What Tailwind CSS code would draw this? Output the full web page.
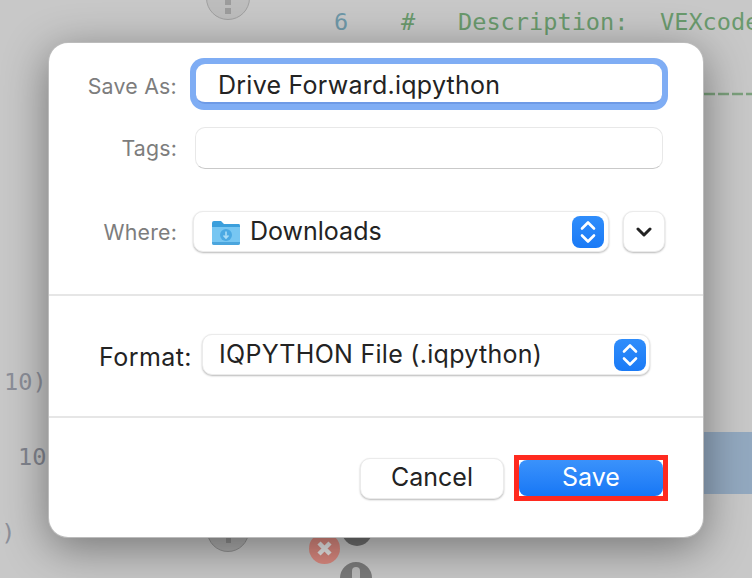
<!doctype html>
<html>
<head>
<meta charset="utf-8">
<script src="https://cdn.jsdelivr.net/npm/@tailwindcss/browser@4"></script>
</head>
<body class="m-0">
<div class="relative w-[752px] h-[578px] overflow-hidden bg-[#c8c8c8] font-['Inter',sans-serif]">
  <!-- dimmed editor behind the sheet -->
  <div class="absolute left-[206px] top-[-24px] w-[44px] h-[44px] rounded-full border border-[#a0a0a0] bg-[#bdbdbd] flex flex-col items-center justify-end gap-[3px] pb-[5px]"><span class="w-[6px] h-[6px] bg-[#9c9c9c]"></span><span class="w-[6px] h-[6px] bg-[#9c9c9c]"></span></div>
  <div class="absolute left-[334px] top-[6px] flex font-['DejaVu_Sans_Mono',monospace] text-[23.6px] leading-[32px] whitespace-pre text-[#6a9a6d]"><span class="text-[#6f98a8] w-[67px]">6</span><span class="w-[57px]">#</span><span class="w-[202px]">Description:</span><span>VEXcode</span></div>
  <svg class="absolute left-[704px] top-[92px]" width="48" height="4"><line x1="0" y1="2" x2="48" y2="2" stroke="#7ba07c" stroke-width="2.5" stroke-dasharray="11 3"/></svg>
  <div class="absolute left-[4px] top-[366px] font-['DejaVu_Sans_Mono',monospace] text-[23.6px] leading-[32px] text-[#8c8f99]">10)</div>
  <div class="absolute left-[18px] top-[441px] font-['DejaVu_Sans_Mono',monospace] text-[23.6px] leading-[32px] text-[#82858f]">10</div>
  <div class="absolute left-[-13px] top-[517px] font-['DejaVu_Sans_Mono',monospace] text-[23.6px] leading-[32px] text-[#8c8f99]">0)</div>
  <div class="absolute left-[704px] top-[432px] w-[48px] h-[62px] bg-[#93a9c0]"></div>
  <div class="absolute left-[207px] top-[510px] w-[42px] h-[42px] rounded-full border border-[#929292] bg-[#aeaeae] flex justify-center items-end pb-[8px]"><span class="w-[5px] h-[6px] bg-[#8f8f8f]"></span></div>
  <div class="absolute left-[342px] top-[510px] w-[30px] h-[36px] rounded-full bg-[#6f6f6f]"></div>
  <div class="absolute left-[309px] top-[533px] w-[31px] h-[31px] rounded-full bg-[#dc8a80] flex items-center justify-center"><svg width="17" height="17" viewBox="0 0 17 17"><path d="M3 3 L14 14 M14 3 L3 14" stroke="#ececec" stroke-width="4.5"/></svg></div>
  <div class="absolute left-[340px] top-[562px] w-[32px] h-[32px] rounded-full bg-[#7b7b7b] flex justify-center pt-[5px]"><span class="w-[8px] h-[14px] rounded-full bg-[#bcbcbc]"></span></div>

  <!-- sheet -->
  <div class="absolute left-[48px] top-[42px] w-[656px] h-[496px] bg-white rounded-[20px] border border-[#8f8f8f]/60 shadow-[0_10px_45px_rgba(0,0,0,0.42)] flex flex-col text-[#232323]">
    <div class="flex flex-col h-[251px] relative">
      <div class="flex items-center h-[52px] mt-[15px]">
        <span class="w-[128px] text-right text-[21.3px] tracking-[0.25px] text-[#7d7d7d] pt-[6px]">Save As:</span>
        <div class="ml-[13px] w-[478px] h-[52px] rounded-[14px] bg-[#7fadf4] p-[6px]">
          <div class="h-full rounded-[9px] bg-white border-b-[2px] border-[#6d9ae6] pl-[22px] pt-[4px] flex items-center text-[25px] tracking-[0.25px] leading-none">Drive Forward.iqpython</div>
        </div>
      </div>
      <div class="flex items-center h-[42px] mt-[17px]">
        <span class="w-[128px] text-right text-[21.3px] tracking-[0.2px] text-[#7d7d7d] pt-[2px]">Tags:</span>
        <div class="ml-[18px] w-[468px] h-[42px] rounded-[10px] bg-white border border-[#e8e8e8] border-b-[#c9c9c9]"></div>
      </div>
      <div class="flex items-center h-[41px] mt-[42px]">
        <span class="w-[128px] text-right text-[21.3px] tracking-[0.2px] text-[#7d7d7d] pt-[2px]">Where:</span>
        <div class="ml-[16px] w-[416px] h-[41px] rounded-[10px] bg-white border border-[#ebebeb] shadow-[0_1px_2px_rgba(0,0,0,0.28)] flex items-center pl-[17px] pr-[3px]">
          <svg width="30" height="28" viewBox="0 0 30 28" class="shrink-0"><path d="M1 5 Q1 3 3 3 H10 L13 6 H28 Q29 6 29 8 V12 H1 Z" fill="#3b9fdc"/><path d="M1 9 H29 V25 Q29 27 27 27 H3 Q1 27 1 25 Z" fill="#77c6f2"/><path d="M1 24 H29 V25 Q29 27 27 27 H3 Q1 27 1 25 Z" fill="#4ba5dd"/><circle cx="15" cy="17" r="6" fill="#4ba9e3"/><path d="M15 13.5 V19.5 M12.5 17.5 L15 20 L17.5 17.5" stroke="#a9dcf7" stroke-width="1.6" fill="none"/></svg>
          <span class="ml-[9px] text-[25px] leading-none">Downloads</span>
          <div class="ml-auto -translate-x-[1px] w-[32px] h-[32px] rounded-[8px] bg-gradient-to-b from-[#2f8dfb] to-[#1a7af6] flex items-center justify-center">
            <svg width="20" height="26" viewBox="0 0 20 26"><path d="M4 9.5 L10 3.5 L16 9.5 M4 16.5 L10 22.5 L16 16.5" fill="none" stroke="#fff" stroke-width="2.6" stroke-linecap="round" stroke-linejoin="round"/></svg>
          </div>
        </div>
        <div class="ml-[14px] w-[42px] h-[41px] rounded-[10px] bg-white border border-[#ebebeb] shadow-[0_1px_2px_rgba(0,0,0,0.28)] flex items-center justify-center">
          <svg width="16" height="12" viewBox="0 0 16 12"><path d="M2 3 L8 9 L14 3" fill="none" stroke="#232323" stroke-width="3" stroke-linecap="round" stroke-linejoin="round"/></svg>
        </div>
      </div>
    </div>
    <div class="h-[2px] bg-[#e6e6e6]"></div>
    <div class="h-[120px] flex items-center pb-[3px]">
      <span class="w-[143px] text-right text-[25px] tracking-[0.43px] pt-[7px] whitespace-nowrap">Format:</span>
      <div class="ml-[10px] w-[448px] h-[41px] rounded-[10px] bg-white border border-[#ebebeb] shadow-[0_1px_2px_rgba(0,0,0,0.28)] flex items-center pl-[16px] pr-[3px]">
        <span class="text-[25px] tracking-[0.28px] leading-none">IQPYTHON File (.iqpython)</span>
        <div class="ml-auto w-[32px] h-[32px] rounded-[8px] bg-gradient-to-b from-[#2f8dfb] to-[#1a7af6] flex items-center justify-center">
          <svg width="20" height="26" viewBox="0 0 20 26"><path d="M4 9.5 L10 3.5 L16 9.5 M4 16.5 L10 22.5 L16 16.5" fill="none" stroke="#fff" stroke-width="2.6" stroke-linecap="round" stroke-linejoin="round"/></svg>
        </div>
      </div>
    </div>
    <div class="h-[2px] bg-[#e6e6e6]"></div>
    <div class="flex items-start pt-[37px] pl-[311px]">
      <div class="mt-[3px] w-[144px] h-[41px] rounded-[10px] bg-white border border-[#ebebeb] shadow-[0_1px_2px_rgba(0,0,0,0.28)] flex items-center justify-center pb-[2px] text-[25px] leading-none">Cancel</div>
      <div class="ml-[10px] w-[154px] h-[46px] border-[5px] border-[#ff2a1f] bg-white">
        <div class="h-full rounded-[8px] bg-gradient-to-b from-[#3a92fb] to-[#1677f6] flex items-center justify-center pb-[2px] text-white text-[25px] leading-none">Save</div>
      </div>
    </div>
  </div>
</div>
</body>
</html>
